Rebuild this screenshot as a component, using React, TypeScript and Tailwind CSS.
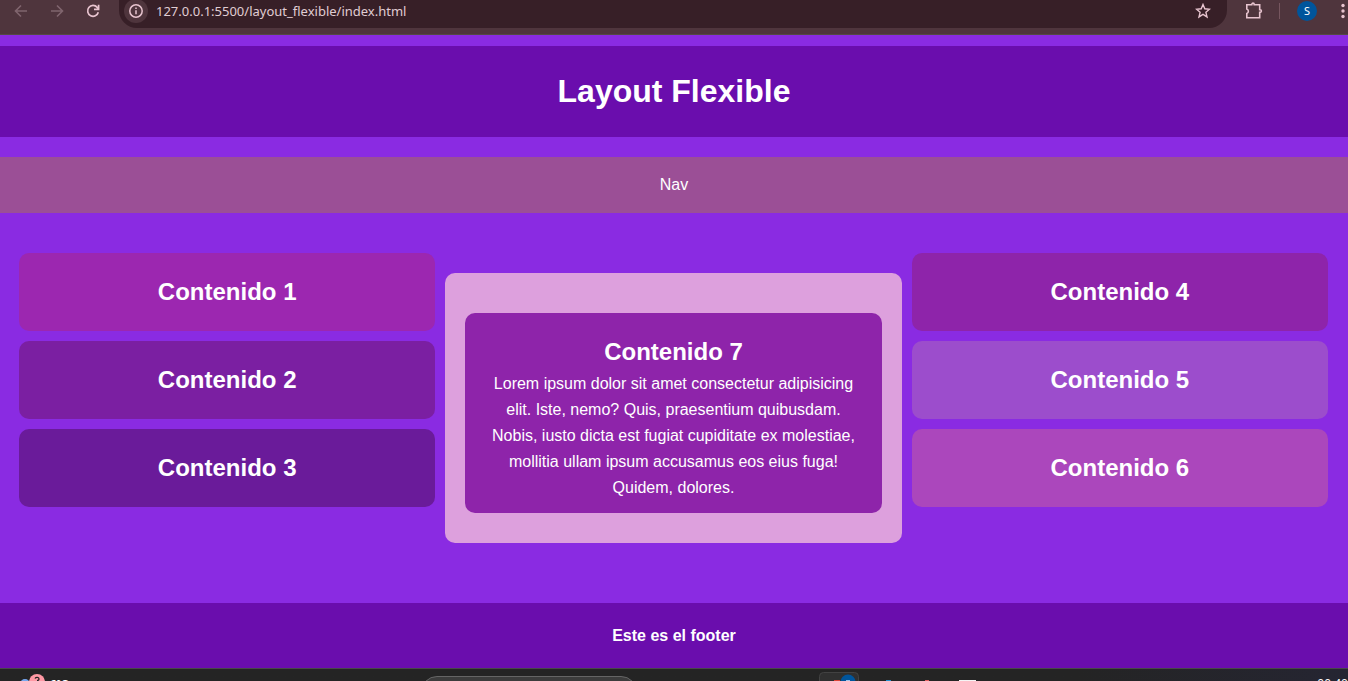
import React from "react";

const leftCards = [
  { title: "Contenido 1", color: "bg-[#9c27b0]" },
  { title: "Contenido 2", color: "bg-[#7b1fa2]" },
  { title: "Contenido 3", color: "bg-[#6a1b9a]" },
];

const rightCards = [
  { title: "Contenido 4", color: "bg-[#8e24aa]" },
  { title: "Contenido 5", color: "bg-[#9c4dcc]" },
  { title: "Contenido 6", color: "bg-[#ab47bc]" },
];

function Column({ cards }: { cards: { title: string; color: string }[] }) {
  return (
    <div className="flex flex-1 flex-col gap-[10px]">
      {cards.map((card) => (
        <section key={card.title} className={`rounded-[10px] p-5 ${card.color}`}>
          <h2 className="text-2xl leading-[38px] font-bold">{card.title}</h2>
        </section>
      ))}
    </div>
  );
}

function BrowserBar() {
  return (
    <div className="flex h-[35px] items-start overflow-hidden border-b border-[#544a45] bg-[#4f353d] font-['Noto_Sans',sans-serif] text-[#e8c4cf]">
      <div className="flex h-[22px] w-[119px] shrink-0 items-center gap-5 pl-[13px]">
        <button aria-label="Back" className="text-[#80656e]">
          <svg width="16" height="16" viewBox="0 0 16 16" fill="none" stroke="currentColor" strokeWidth="1.6">
            <path d="M14 8H3M8 2.500 2.500 8 8 13.500" />
          </svg>
        </button>
        <button aria-label="Forward" className="text-[#80656e]">
          <svg width="16" height="16" viewBox="0 0 16 16" fill="none" stroke="currentColor" strokeWidth="1.6">
            <path d="M2 8h11M8 2.500 13.500 8 8 13.500" />
          </svg>
        </button>
        <button aria-label="Reload">
          <svg width="16" height="16" viewBox="0 0 16 16" fill="none" stroke="currentColor" strokeWidth="1.7">
            <path d="M13.300 9.200A5.400 5.400 0 1 1 12.200 4.400L13.500 6" />
            <path d="M13.600 1.800v4.500H9" />
          </svg>
        </button>
      </div>
      <div className="flex h-7 min-w-0 flex-1 items-start rounded-b-[18px] bg-[#371f27] pl-[5px]">
        <button aria-label="Site information" className="-mt-px flex h-6 w-6 shrink-0 items-center justify-center rounded-full bg-[#4f353d]">
          <svg width="16" height="16" viewBox="0 0 16 16" fill="none" stroke="currentColor" strokeWidth="1.5">
            <circle cx="8" cy="8" r="6.200" />
            <path d="M8 7.200v4M8 4.500v1.500" />
          </svg>
        </button>
        <input
          aria-label="Address"
          readOnly
          value="127.0.0.1:5500/layout_flexible/index.html"
          className="ml-2 h-[22px] min-w-0 flex-1 bg-transparent text-[13px] text-[#e0cdd3] outline-none"
        />
        <button aria-label="Bookmark" className="mr-4 flex h-[22px] items-center">
          <svg width="16" height="16" viewBox="0 0 16 16" fill="none" stroke="currentColor" strokeWidth="1.4">
            <path d="m8 1.500 1.800 4.300 4.700.400-3.600 3.100 1.100 4.600L8 11.400l-4 2.500 1.100-4.600L1.500 6.200l4.700-.400Z" />
          </svg>
        </button>
      </div>
      <div className="flex h-[22px] shrink-0 items-center pl-[17px]">
        <button aria-label="Extensions">
          <svg width="19" height="18" viewBox="0 0 19 18" fill="none" stroke="currentColor" strokeWidth="1.6">
            <path d="M2.800 2.800h5V2.300a1.200 1.200 0 0 1 2.400 0v.500h5.500v5h.400a1.300 1.300 0 0 1 0 2.600h-.400v5.300H2.800v-4.200a2.400 2.400 0 0 0 0-4.500Z" />
          </svg>
        </button>
        <div className="ml-4 h-4 w-px bg-[#76565f]" />
        <button aria-label="Profile" className="ml-[17px] h-5 w-5 rounded-full bg-[#00559c] text-[11px] leading-5 text-white">
          S
        </button>
        <button aria-label="More" className="ml-5">
          <svg width="11" height="16" viewBox="0 0 11 16" fill="currentColor">
            <circle cx="6" cy="2.500" r="1.700" />
            <circle cx="6" cy="8" r="1.700" />
            <circle cx="6" cy="13.500" r="1.700" />
          </svg>
        </button>
      </div>
    </div>
  );
}

function Taskbar() {
  return (
    <div className="flex h-[13px] items-start overflow-hidden border-t border-[#484848] bg-linear-to-r from-[#242424] from-80% to-[#252532] font-['Noto_Sans',sans-serif] text-white">
      <div className="flex flex-[421_1_0px] items-start">
        <svg className="ml-5 shrink-0" width="26" height="12" viewBox="0 0 26 12">
          <circle cx="5" cy="15" r="5" fill="#76a7ef" />
          <circle cx="17" cy="13" r="8" fill="#ff99a4" />
          <path d="M15 9.500c1-1.500 4-1.500 4 .500 0 1-1 1.500-2 1.500" fill="none" stroke="#222" strokeWidth="1.3" />
        </svg>
        <span className="mt-[7px] ml-1 text-[11px] leading-4 font-bold">6°C</span>
      </div>
      <div className="mt-[7px] h-8 w-[216px] shrink-0 rounded-[16px] border border-[#656565] bg-[#3c3c3c]" />
      <div className="flex flex-[711_1_0px] items-start justify-between">
        <svg className="ml-[159px] shrink-0" width="180" height="12" viewBox="0 0 180 12">
          <rect x="23.500" y="3.500" width="39" height="20" rx="4" fill="#303030" stroke="#424242" />
          <path d="M38 11h6v1h-6z" fill="#db4437" />
          <circle cx="52" cy="13" r="7.500" fill="#00559c" />
          <path d="M50 11h4v1h-4z" fill="#9ec6ee" />
          <path d="M90 11h5v1h-5z" fill="#2490d0" />
          <path d="M129 11h4v1h-4z" fill="#e06060" />
          <path d="M163 11h17v1h-17z" fill="#f4f4f4" />
        </svg>
        <span className="mt-[7px] text-xs leading-4">00:40</span>
      </div>
    </div>
  );
}

export default function App() {
  return (
    <div className="flex min-h-screen flex-col bg-[#8a2be2] font-['Liberation_Sans',Arial,sans-serif] text-base leading-[26px] text-white">
      <BrowserBar />
      <div className="flex flex-1 flex-col pt-[11px] text-center">
        <header className="bg-[#6a0dad] p-5">
          <h1 className="text-[32px] leading-[51px] font-bold">Layout Flexible</h1>
        </header>
        <nav className="mt-5 bg-[#9b4f96] p-[15px]">Nav</nav>
        <main className="flex flex-1 items-start gap-[10px] pt-10 pr-5 pb-[60px] pl-[19px]">
          <Column cards={leftCards} />
          <div className="mt-5 flex-1 rounded-[10px] bg-[#dda0dd] px-5 pt-10 pb-[30px]">
            <article className="rounded-[10px] bg-[#8e24aa] px-5 pt-5 pb-3">
              <h2 className="text-2xl leading-[38px] font-bold">Contenido 7</h2>
              <p>
                Lorem ipsum dolor sit amet consectetur adipisicing elit. Iste, nemo? Quis, praesentium quibusdam.
                Nobis, iusto dicta est fugiat cupiditate ex molestiae, mollitia ullam ipsum accusamus eos eius fuga!
                Quidem, dolores.
              </p>
            </article>
          </div>
          <Column cards={rightCards} />
        </main>
        <footer className="bg-[#6a0dad] px-5 pt-5 pb-[19px] font-bold">Este es el footer</footer>
      </div>
      <Taskbar />
    </div>
  );
}
